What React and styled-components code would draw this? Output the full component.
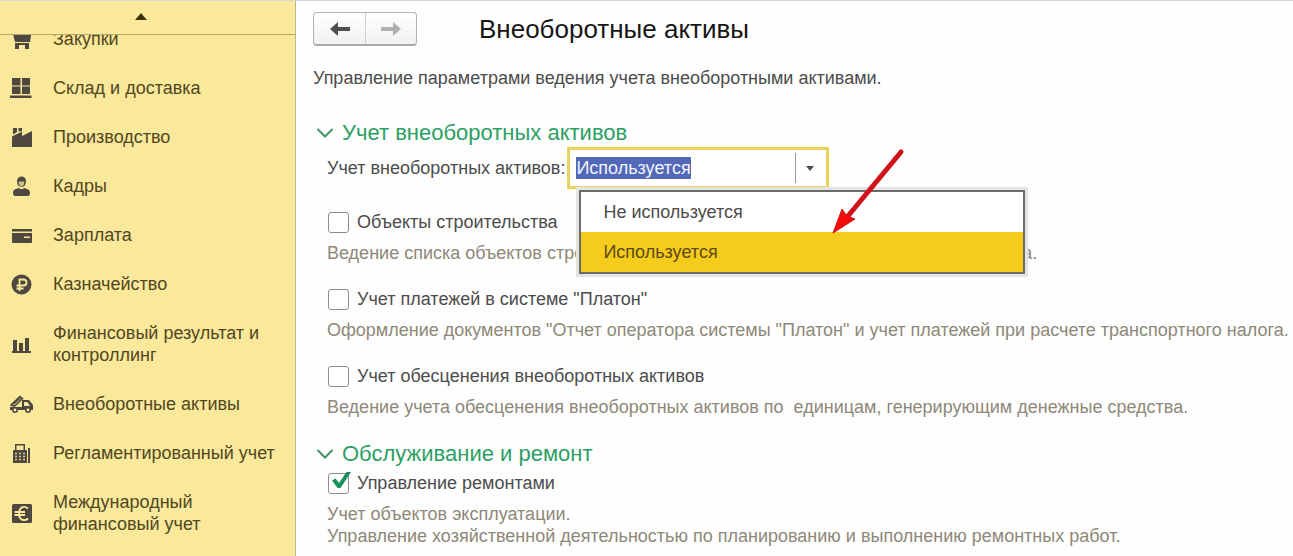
import React, { useEffect, useRef } from "react";
import styled, { createGlobalStyle } from "styled-components";

const GlobalStyle = createGlobalStyle`
  *, *::before, *::after { box-sizing: border-box; }
  body {
    margin: 0;
    background: #fefefe;
    color: #4c4c4c;
    font: 18px/22px "Liberation Sans", Arial, sans-serif;
  }
  button, input { font: inherit; color: inherit; }
`;

const Page = styled.div`
  display: flex;
  height: 100vh;
  overflow: hidden;
  border-top: 1px solid #d9d5d0;
`;

const Sidebar = styled.nav`
  display: flex;
  flex-direction: column;
  flex: 0 0 296px;
  background: #fae89b;
  border-right: 1px solid #bdb78f;
`;

const ScrollUp = styled.button`
  flex: 0 0 34px;
  display: flex;
  align-items: center;
  justify-content: center;
  padding: 0 14px 4px 0;
  border: 0;
  border-bottom: 1px solid #b9a968;
  background: #fbea9c;
  color: #40340f;
`;

const MenuViewport = styled.div`
  flex: 1;
  min-height: 0;
  overflow: hidden;
`;

const Menu = styled.ul`
  list-style: none;
  margin: -20px 0 0;
  padding: 0;
`;

const MenuLink = styled.a`
  display: flex;
  align-items: center;
  gap: 20px;
  padding: 13px 12px 14px 10px;
  color: #51471f;
  text-decoration: none;

  svg { flex: none; color: #4e4840; }
`;

const Main = styled.main`
  flex: 1;
  min-width: 0;
  padding: 11px 0 0 17px;
  overflow: hidden;
`;

const Header = styled.header`
  display: flex;
  align-items: center;
  gap: 62px;
`;

const History = styled.div`
  display: flex;
  height: 34px;
  border: 1px solid #b4b4b4;
  border-bottom: 2px solid #a8a8a8;
  border-radius: 4px;
  background: linear-gradient(#ffffff, #f1f1f1);
`;

const HistoryButton = styled.button`
  display: flex;
  align-items: center;
  justify-content: center;
  width: 51px;
  padding: 0;
  border: 0;
  background: none;
  color: #4d4d4d;

  & + & { border-left: 1px solid #d0d0d0; }
  &:disabled { color: #b0b0b0; }
`;

const Title = styled.h1`
  margin: 0;
  font-size: 26px;
  line-height: 34px;
  font-weight: 400;
  color: #161616;
`;

const Intro = styled.p`
  margin: 21px 0 30px;
`;

const Section = styled.section`
  margin-bottom: 22px;
`;

const SectionTitle = styled.h2`
  display: flex;
  align-items: center;
  gap: 8px;
  margin: 0;
  padding-left: 3px;
  font-size: 22px;
  line-height: 28px;
  font-weight: 400;
  color: #2c9f63;

  svg { color: #3f9468; }
`;

const SectionBody = styled.div`
  padding: ${(p) => (p.$spaced ? "4px 0 0 14px" : "0 0 0 14px")};
`;

const Field = styled.div`
  display: flex;
  align-items: center;
  gap: 2px;
  margin-bottom: 22px;
`;

const Combo = styled.div`
  position: relative;
  display: flex;
  width: 262px;
  height: 42px;
  padding: 3px 0;
  border: 3px solid #ead35c;
  background: #ffffff;
`;

const ComboInput = styled.input`
  flex: 1;
  min-width: 0;
  padding: 0 0 0 6px;
  border: 0;
  outline: 0;
  background: none;

  &::selection { background: #5468b8; color: #f1f3ff; }
`;

const ComboButton = styled.button`
  display: flex;
  align-items: center;
  justify-content: center;
  width: 31px;
  padding: 0 3px 0 0;
  border: 0;
  border-left: 1px solid #9a9a9a;
  background: none;
`;

const Options = styled.ul`
  position: absolute;
  z-index: 1;
  top: 40px;
  left: 9px;
  width: 446px;
  margin: 0;
  padding: 0;
  list-style: none;
  border: 2px solid #6b6b6b;
  background: #ffffff;
  box-shadow: 0 0 0 3px #e4e4e4;
`;

const Option = styled.li`
  padding: 9px 22px;
  color: ${(p) => (p["aria-selected"] ? "#5c4a12" : "#4c4c4c")};
  background: ${(p) => (p["aria-selected"] ? "#f5cb1c" : "transparent")};
`;

const Pointer = styled.svg`
  position: absolute;
  z-index: 2;
  top: -3px;
  left: 257px;
`;

const Settings = styled.div`
  display: flex;
  flex-direction: column;
  gap: 24px;
`;

const CheckLabel = styled.label`
  display: flex;
  align-items: center;
  gap: 8px;
  height: 22px;
  padding-left: 1px;
`;

const CheckWrap = styled.span`
  position: relative;
  display: flex;

  svg { position: absolute; left: 4px; top: -2px; pointer-events: none; }
`;

const CheckBox = styled.input`
  appearance: none;
  width: 21px;
  height: 21px;
  margin: 0;
  border: 1px solid #8c8c8c;
  border-radius: 3px;
  background: #ffffff;
`;

const Hint = styled.p`
  margin: 9px 0 0;
  color: #8d8878;
  white-space: pre-wrap;
`;

const icons = {
  cart: (
    <>
      <path d="M2 1h20l-2 12H5z" fill="currentColor" />
      <path d="M5 14h14v2H5zM5 16h4v4H5zM15 16h4v4h-4z" fill="currentColor" />
    </>
  ),
  boxes: (
    <path d="M2 0h8.500v7.500H2zM12 0h8v7.500h-8zM2 8.500h8.500V16H2zM12 8.500h8V16h-8zM0 17.500h21.500V20H0z" fill="currentColor" />
  ),
  factory: (
    <path d="M3 1h4v4L3 7.500zM8.500 1h3.500v3L8.500 4.500zM2 9.500l10-5V9l10-5v16H2z" fill="currentColor" />
  ),
  person: (
    <>
      <path d="M7 5c0-6 9-6 9 0l-.5 3c-1 4-7 4-8 0z" fill="currentColor" />
      <path d="M8.800 5.500h5.400c0 4-1.300 5-2.700 5s-2.700-1-2.700-5z" fill="#cfc084" />
      <path d="M3 17c0-4 3-4 6-5 1 1.500 4 1.500 5 0 3 1 6 1 6 5 0 2-1 3-2 3H5c-1 0-2-1-2-3z" fill="currentColor" />
    </>
  ),
  card: (
    <path d="M2 4h20v2.500H2zM2 8h20v9q0 1-1 1H3q-1 0-1-1zM14 11.500V13h6v-1.500z" fillRule="evenodd" fill="currentColor" />
  ),
  ruble: (
    <>
      <circle cx="11.500" cy="10.500" r="10" fill="currentColor" />
      <path d="M9.500 17V5.500h4a3 3 0 0 1 0 6H6.500M6.500 14.500h7" stroke="#fae89b" strokeWidth="1.800" fill="none" />
    </>
  ),
  chart: (
    <path d="M3 6h4v11h2V9h4v8h2V4h4v13h2v2H2v-2h1z" fill="currentColor" />
  ),
  truck: (
    <>
      <path d="M1 11L10 2.500l2.500 2L4.500 12z" fill="none" stroke="currentColor" strokeWidth="1.600" />
      <path d="M3 10l8-7" stroke="currentColor" strokeWidth="2" />
      <path d="M0 13h12V6h7l4 5v5H0zM14 8v4h6l-2.500-4z" fillRule="evenodd" fill="currentColor" />
      <circle cx="5" cy="16" r="2.200" fill="#fae89b" stroke="currentColor" strokeWidth="1.600" />
      <circle cx="18" cy="16" r="2.200" fill="#fae89b" stroke="currentColor" strokeWidth="1.600" />
    </>
  ),
  register: (
    <>
      <path d="M5 1h10v6h2v13H3V7h2zM6.500 2.500V7h7V2.500z" fillRule="evenodd" fill="currentColor" />
      <path d="M5 10.500h10M5 13.500h10M5 16.500h10" stroke="#d8c98a" strokeWidth="1.500" strokeDasharray="2 2" />
      <path d="M19 5v15" stroke="currentColor" strokeWidth="2" />
    </>
  ),
  euro: (
    <>
      <rect x="2" y="1" width="20" height="19" rx="1.500" fill="currentColor" />
      <path d="M18 5.500c-4-3.500-9-1-9 5s5 8.500 9 5M4.500 9H15M4.500 12H15" stroke="#fae89b" strokeWidth="1.900" fill="none" />
    </>
  ),
};

const menuItems = [
  ["cart", "Закупки"],
  ["boxes", "Склад и доставка"],
  ["factory", "Производство"],
  ["person", "Кадры"],
  ["card", "Зарплата"],
  ["ruble", "Казначейство"],
  ["chart", "Финансовый результат и контроллинг"],
  ["truck", "Внеоборотные активы"],
  ["register", "Регламентированный учет"],
  ["euro", "Международный финансовый учет"],
];

function MenuIcon({ name }) {
  return (
    <svg width="23" height="21" viewBox="0 0 23 21" aria-hidden="true">
      {icons[name]}
    </svg>
  );
}

function Arrow({ flip }) {
  return (
    <svg width="20" height="16" viewBox="0 0 20 16" aria-hidden="true">
      <path
        d="M0 8L8 1v5h12v4H8v5z"
        fill="currentColor"
        transform={flip ? "matrix(-1 0 0 1 20 0)" : undefined}
      />
    </svg>
  );
}

function Heading({ children }) {
  return (
    <SectionTitle>
      <svg width="18" height="12" viewBox="0 0 18 12" aria-hidden="true">
        <path d="M1.500 2L9 9.500 16.500 2" fill="none" stroke="currentColor" strokeWidth="2" />
      </svg>
      {children}
    </SectionTitle>
  );
}

function Setting({ label, hint, checked = false }) {
  return (
    <div>
      <CheckLabel>
        <CheckWrap>
          <CheckBox type="checkbox" defaultChecked={checked} />
          {checked && (
            <svg width="19" height="19" viewBox="0 0 19 19" aria-hidden="true">
              <path d="M0 9.500L3.500 7.500 7 12 14.500 1H19L8.500 17H5.500z" fill="#17905a" />
            </svg>
          )}
        </CheckWrap>
        {label}
      </CheckLabel>
      <Hint>{hint}</Hint>
    </div>
  );
}

function AssetCombo() {
  const input = useRef(null);

  useEffect(() => {
    input.current.focus();
    input.current.select();
  }, []);

  return (
    <Combo>
      <ComboInput
        ref={input}
        id="asset-mode"
        role="combobox"
        aria-expanded="true"
        aria-controls="asset-options"
        defaultValue="Используется"
      />
      <ComboButton type="button" aria-label="Открыть список">
        <svg width="8" height="5" viewBox="0 0 8 5" aria-hidden="true">
          <path d="M0 0h8L4 5z" fill="currentColor" />
        </svg>
      </ComboButton>
      <Options id="asset-options" role="listbox">
        <Option role="option" aria-selected={false}>Не используется</Option>
        <Option role="option" aria-selected={true}>Используется</Option>
      </Options>
      <Pointer width="80" height="90" viewBox="0 0 80 90" aria-hidden="true">
        <path d="M74 5L21 69" stroke="#d0121a" strokeWidth="5" strokeLinecap="round" />
        <path d="M6 86L15 62l5 7 8 3z" fill="#f50a0a" stroke="#e01010" />
      </Pointer>
    </Combo>
  );
}

export default function App() {
  return (
    <>
      <GlobalStyle />
      <Page>
        <Sidebar>
          <ScrollUp type="button" aria-label="Прокрутить вверх">
            <svg width="14" height="8" viewBox="0 0 14 8" aria-hidden="true">
              <path d="M1 8l6-7 6 7z" fill="currentColor" />
            </svg>
          </ScrollUp>
          <MenuViewport>
            <Menu>
              {menuItems.map(([icon, text]) => (
                <li key={icon}>
                  <MenuLink href="#">
                    <MenuIcon name={icon} />
                    <span>{text}</span>
                  </MenuLink>
                </li>
              ))}
            </Menu>
          </MenuViewport>
        </Sidebar>
        <Main>
          <Header>
            <History>
              <HistoryButton type="button" aria-label="Назад"><Arrow /></HistoryButton>
              <HistoryButton type="button" aria-label="Вперед" disabled><Arrow flip /></HistoryButton>
            </History>
            <Title>Внеоборотные активы</Title>
          </Header>
          <Intro>Управление параметрами ведения учета внеоборотными активами.</Intro>
          <Section>
            <Heading>Учет внеоборотных активов</Heading>
            <SectionBody>
              <Field>
                <label htmlFor="asset-mode">Учет внеоборотных активов:</label>
                <AssetCombo />
              </Field>
              <Settings>
                <Setting
                  label="Объекты строительства"
                  hint="Ведение списка объектов строительства, учет расходов по объектам строительства."
                />
                <Setting
                  label={'Учет платежей в системе "Платон"'}
                  hint={'Оформление документов "Отчет оператора системы "Платон" и учет платежей при расчете транспортного налога.'}
                />
                <Setting
                  label="Учет обесценения внеоборотных активов"
                  hint={"Ведение учета обесценения внеоборотных активов по  единицам, генерирующим денежные средства."}
                />
              </Settings>
            </SectionBody>
          </Section>
          <Section>
            <Heading>Обслуживание и ремонт</Heading>
            <SectionBody $spaced>
              <Settings>
                <Setting
                  checked
                  label="Управление ремонтами"
                  hint={"Учет объектов эксплуатации.\nУправление хозяйственной деятельностью по планированию и выполнению ремонтных работ."}
                />
              </Settings>
            </SectionBody>
          </Section>
        </Main>
      </Page>
    </>
  );
}
